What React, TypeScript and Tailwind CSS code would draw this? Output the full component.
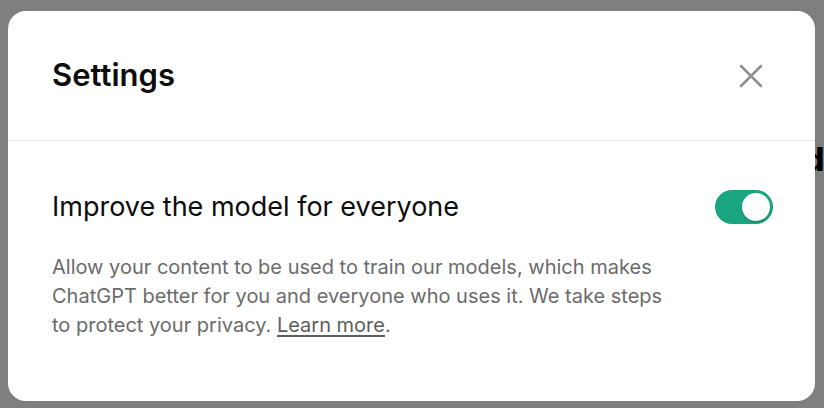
import React, { useState } from 'react';

const font = { fontFamily: 'Inter, "Noto Sans", sans-serif' };

const CloseIcon: React.FC = () => (
    <svg width="24" height="24" viewBox="0 0 24 24" fill="none" stroke="currentColor" strokeWidth="2.5" strokeLinecap="round">
        <path d="M2 2 22 22M22 2 2 22" />
    </svg>
);

const Toggle: React.FC<{ on: boolean; onChange: () => void }> = ({ on, onChange }) => (
    <button
        onClick={onChange}
        className={`flex h-[34px] w-[58px] shrink-0 items-center rounded-full p-[3px] transition-colors ${on ? 'justify-end bg-[#19a57f]' : 'justify-start bg-[#d9d9d9]'}`}
    >
        <span className="block h-[28px] w-[28px] rounded-full bg-white shadow-[0_1px_2px_rgba(0,0,0,0.25)]" />
    </button>
);

export default function App() {
    const [improve, setImprove] = useState(true);

    return (
        <div className="relative h-[408px] w-[824px] overflow-hidden bg-white" style={font}>
            {/* page text behind the overlay */}
            <span className="absolute left-[804px] top-[136px] text-[32px] font-extrabold leading-[48px] text-black">d</span>

            <div className="absolute inset-0 bg-black/50 pl-[8px] pt-[11px]">
                <div className="flex h-[390px] w-[807px] flex-col rounded-[18px] bg-white">
                    <div className="flex h-[130px] items-center justify-between border-b border-[#e5e5e5] pl-[44px] pr-[52px]">
                        <h2 className="text-[31px] font-semibold text-[#0d0d0d]">Settings</h2>
                        <button className="text-[#8f8f8f]">
                            <CloseIcon />
                        </button>
                    </div>

                    <div className="flex flex-col pl-[44px] pr-[42px] pt-[46px]">
                        <div className="flex items-center justify-between">
                            <span className="text-[27px] text-[#0d0d0d]">Improve the model for everyone</span>
                            <Toggle on={improve} onChange={() => setImprove(v => !v)} />
                        </div>
                        <p className="mt-[25px] max-w-[620px] text-[20px] leading-[29px] text-[#6b6b6b]">
                            Allow your content to be used to train our models, which makes ChatGPT better for you and everyone who uses it. We take steps to protect your privacy.{' '}
                            <a className="text-[#5d5d5d] underline underline-offset-[3px]">Learn more</a>.
                        </p>
                    </div>
                </div>
            </div>
        </div>
    );
}
